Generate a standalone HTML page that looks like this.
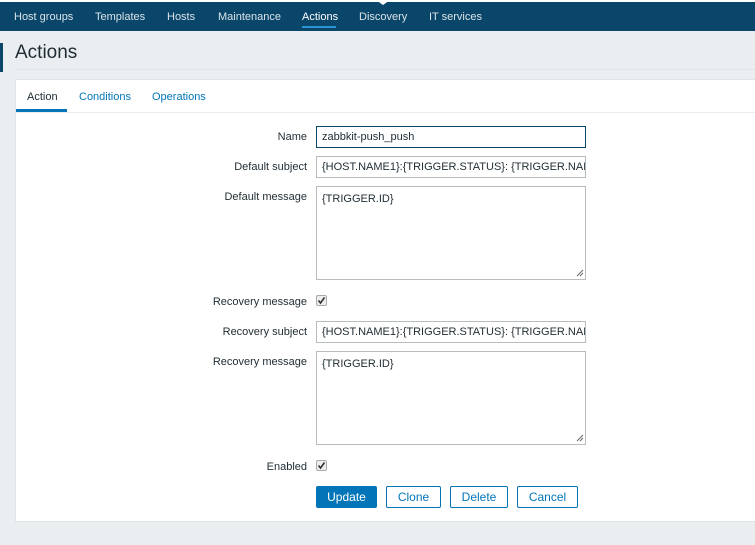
<!DOCTYPE html>
<html><head><meta charset="utf-8"><style>
*{box-sizing:border-box;margin:0;padding:0}
body{width:755px;height:545px;background:#ebeef0;font-family:"Liberation Sans",Arial,sans-serif;font-size:11px;color:#1f2c33;position:relative;overflow:hidden}
.abs{position:absolute}
.nav{left:0;top:2px;width:755px;height:29px;background:#0a466a}
.nav span{position:absolute;top:9px;color:#fff;font-size:11px;opacity:.85}
.nav span.act{opacity:1}
.card{left:15px;top:79px;width:745px;height:443px;background:#fff;border:1px solid #dfe4e7}
.lbl{position:absolute;right:448px;text-align:right;white-space:nowrap;color:#1f2c33}
.inp{position:absolute;left:316px;width:270px;border:1px solid #b7bcbf;background:#fff;padding:0 5px;white-space:nowrap;overflow:hidden;color:#1f2c33}
.btn{position:absolute;top:486px;height:22px;border:1px solid #0275b8;color:#0275b8;background:#fff;border-radius:2px;text-align:center;line-height:20px;font-size:12px}
.cb{position:absolute;left:316px;width:11px;height:11px}
</style></head><body>
<div class="abs" style="left:0;top:0;width:755px;height:2px;background:#fff"></div>
<div class="abs nav">
<span style="left:14px">Host groups</span>
<span style="left:95px">Templates</span>
<span style="left:167px">Hosts</span>
<span style="left:218px">Maintenance</span>
<span class="act" style="left:302px">Actions</span>
<span style="left:359px">Discovery</span>
<span style="left:429px">IT services</span>
<div style="position:absolute;left:302px;top:24px;width:34px;height:2px;background:#2a93d5"></div>
</div>
<svg class="abs" style="left:376px;top:0" width="14" height="5"><polygon points="0,0 14,0 7,5" fill="#fff"/></svg>
<div class="abs" style="left:0;top:43px;width:3px;height:29px;background:#0a466a"></div>
<div class="abs" style="left:15px;top:42px;font-size:19px;color:#1f2c33">Actions</div>
<div class="abs" style="left:15px;top:69px;width:740px;height:1px;background:#dfe4e7"></div>
<div class="abs card"></div>
<div class="abs" style="left:16px;top:112px;width:739px;height:1px;background:#ebeef0"></div>
<div class="abs" style="left:27px;top:91px">Action</div>
<div class="abs" style="left:79px;top:91px;color:#0275b8">Conditions</div>
<div class="abs" style="left:152px;top:91px;color:#0275b8">Operations</div>
<div class="abs" style="left:16px;top:109px;width:51px;height:3px;background:#0275b8"></div>

<div class="lbl" style="top:131px">Name</div>
<div class="inp" style="top:126px;height:22px;line-height:20px;border-color:#0a466a">zabbkit-push_push</div>
<div class="lbl" style="top:161px">Default subject</div>
<div class="inp" style="top:156px;height:22px;line-height:20px">{HOST.NAME1}:{TRIGGER.STATUS}: {TRIGGER.NAME}</div>
<div class="lbl" style="top:191px">Default message</div>
<div class="inp" style="top:186px;height:94px;padding-top:6px">{TRIGGER.ID}</div>
<svg class="abs" style="left:576px;top:269px" width="8" height="8"><path d="M1 7L7 1M4 7L7 4" stroke="#666" stroke-width="1"/></svg>

<div class="lbl" style="top:296px">Recovery message</div>
<svg class="cb" style="top:295px" viewBox="0 0 11 11"><rect x=".5" y=".5" width="10" height="10" rx="1.5" fill="#eee" stroke="#aaa"/><path d="M2.5 5.5L4.5 8L8.5 2.5" stroke="#333" stroke-width="1.6" fill="none"/></svg>
<div class="lbl" style="top:326px">Recovery subject</div>
<div class="inp" style="top:321px;height:22px;line-height:20px">{HOST.NAME1}:{TRIGGER.STATUS}: {TRIGGER.NAME}</div>
<div class="lbl" style="top:356px">Recovery message</div>
<div class="inp" style="top:351px;height:94px;padding-top:6px">{TRIGGER.ID}</div>
<svg class="abs" style="left:576px;top:434px" width="8" height="8"><path d="M1 7L7 1M4 7L7 4" stroke="#666" stroke-width="1"/></svg>

<div class="lbl" style="top:461px">Enabled</div>
<svg class="cb" style="top:460px" viewBox="0 0 11 11"><rect x=".5" y=".5" width="10" height="10" rx="1.5" fill="#eee" stroke="#aaa"/><path d="M2.5 5.5L4.5 8L8.5 2.5" stroke="#333" stroke-width="1.6" fill="none"/></svg>

<div class="btn" style="left:316px;width:61px;background:#0275b8;color:#fff">Update</div>
<div class="btn" style="left:386px;width:55px">Clone</div>
<div class="btn" style="left:450px;width:58px">Delete</div>
<div class="btn" style="left:517px;width:61px">Cancel</div>
</body></html>
